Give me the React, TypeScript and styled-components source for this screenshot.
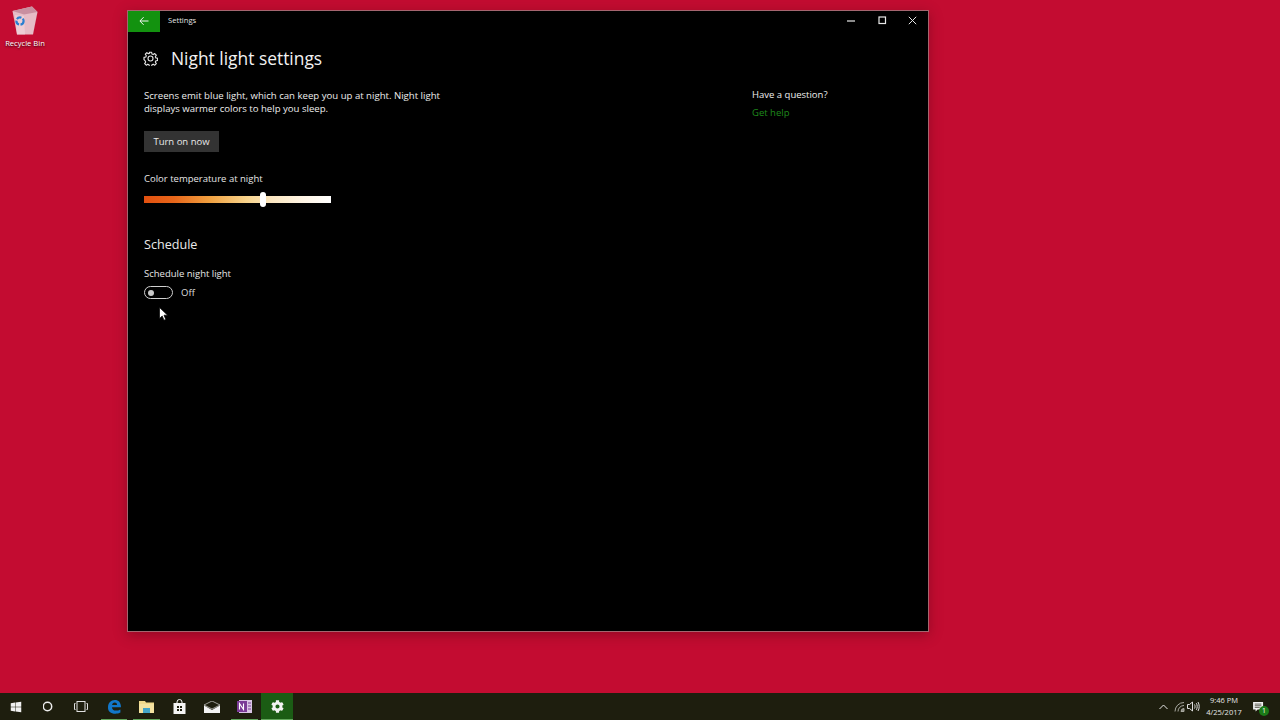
import { FC } from 'react';
import styled, { createGlobalStyle } from 'styled-components';
import { FaWindows, FaCog } from 'react-icons/fa';

const GlobalStyle = createGlobalStyle`
  html, body {
    margin: 0;
    padding: 0;
    overflow: hidden;
    background: #c30c31;
  }
  * { box-sizing: border-box; }
`;

const UI_FONT = `"Open Sans", "Noto Sans", "Liberation Sans", sans-serif`;

const GearIcon: FC<{ size: number; color: string; strokeWidth?: number }> = ({ size, color, strokeWidth = 1.8 }) => (
  <svg width={size} height={size} viewBox="0 0 24 24" fill="none" stroke={color} strokeWidth={strokeWidth} strokeLinejoin="round">
    <path d="M10.2 2h3.6l.6 2.9 1.9.8 2.5-1.6 2.5 2.5-1.6 2.5.8 1.9 2.9.6v3.6l-2.9.6-.8 1.9 1.6 2.5-2.5 2.5-2.5-1.6-1.9.8-.6 2.9h-3.6l-.6-2.9-1.9-.8-2.5 1.6-2.5-2.5 1.6-2.5-.8-1.9L1.600 13.800v-3.600l2.900-.6.8-1.900-1.600-2.500 2.500-2.500 2.500 1.600 1.900-.8z" />
    <circle cx="12" cy="12" r="4" />
  </svg>
);

const Desktop = styled.div`
  position: relative;
  width: 1280px;
  height: 720px;
  display: flex;
  flex-direction: column;
  font-family: ${UI_FONT};
  background: #c30c31;
`;

const Wallpaper = styled.div`
  flex: 1;
  position: relative;
`;

const DesktopIcon = styled.div`
  position: absolute;
  left: 0;
  top: 6px;
  width: 50px;
  display: flex;
  flex-direction: column;
  align-items: center;
  gap: 2px;
`;

const DesktopIconLabel = styled.span`
  font-size: 7.6px;
  line-height: 12px;
  color: #fff;
  white-space: nowrap;
  text-shadow: 0 1px 2px rgba(0, 0, 0, 0.8);
`;

const Window = styled.div`
  position: absolute;
  left: 127px;
  top: 10px;
  width: 802px;
  height: 622px;
  background: #000;
  border: 1px solid #a5656f;
  display: flex;
  flex-direction: column;
  box-shadow: 0 3px 12px rgba(60, 0, 15, 0.35);
`;

const TitleBar = styled.div`
  height: 21px;
  flex: none;
  display: flex;
  align-items: center;
`;

const BackButton = styled.div`
  width: 32px;
  height: 21px;
  padding-bottom: 1px;
  background: #13920f;
  display: flex;
  align-items: center;
  justify-content: center;
`;

const TitleText = styled.span`
  margin-left: 8px;
  margin-bottom: 3px;
  font-size: 7.6px;
  color: #e4e4e4;
  flex: 1;
`;

const WindowControls = styled.div`
  display: flex;
  align-items: center;
`;

const WindowControl = styled.div`
  width: 30.5px;
  height: 19px;
  margin-bottom: 2px;
  display: flex;
  align-items: center;
  justify-content: center;
`;

const Content = styled.div`
  flex: 1;
  display: flex;
  justify-content: space-between;
  padding: 0 0 0 16px;
`;

const MainColumn = styled.div`
  display: flex;
  flex-direction: column;
  align-items: flex-start;
`;

const PageHeader = styled.div`
  display: flex;
  align-items: center;
  gap: 13px;
  height: 26px;
  margin-top: 13px;
  margin-left: -1px;
`;

const PageTitle = styled.h1`
  margin: 0;
  font-size: 17.4px;
  font-weight: 400;
  line-height: 26px;
  color: #f2f2f2;
`;

const Body = styled.p`
  margin: 18px 0 0;
  width: 310px;
  font-size: 9.6px;
  line-height: 13px;
  color: #ededed;
`;

const ActionButton = styled.div`
  margin-top: 16px;
  height: 21px;
  width: 75px;
  background: #333;
  color: #e8e8e8;
  font-size: 9.5px;
  display: flex;
  align-items: center;
  justify-content: center;
`;

const FieldLabel = styled.div<{ $top: number }>`
  margin-top: ${(p) => p.$top}px;
  font-size: 9.5px;
  line-height: 14px;
  color: #e6e6e6;
`;

const SliderTrack = styled.div`
  position: relative;
  margin-top: 10px;
  width: 187px;
  height: 7px;
  background: linear-gradient(
    90deg,
    #e2500f 0%,
    #e8661a 16%,
    #f0a040 35%,
    #f8d48c 55%,
    #fbe6c0 68%,
    #fff5e5 85%,
    #ffffff 100%
  );
`;

const SliderThumb = styled.div`
  position: absolute;
  left: 116px;
  top: -4px;
  width: 6px;
  height: 15px;
  border-radius: 3px;
  background: #fff;
`;

const SectionTitle = styled.h2`
  margin: 33px 0 0;
  font-size: 12.6px;
  font-weight: 400;
  line-height: 18px;
  color: #eaeaea;
`;

const ToggleRow = styled.div`
  margin-top: 5px;
  display: flex;
  align-items: center;
  gap: 8px;
`;

const ToggleTrack = styled.div`
  width: 29px;
  height: 13px;
  border: 1.5px solid #d0d0d0;
  border-radius: 7px;
  display: flex;
  align-items: center;
  padding-left: 3px;
`;

const ToggleKnob = styled.div`
  width: 6px;
  height: 6px;
  border-radius: 50%;
  background: #c9c9c9;
`;

const ToggleText = styled.span`
  font-size: 9.5px;
  color: #dcdcdc;
`;

const SideColumn = styled.div`
  width: 176px;
  padding-top: 56px;
  display: flex;
  flex-direction: column;
`;

const SideTitle = styled.div`
  font-size: 9.5px;
  line-height: 14px;
  color: #eee;
`;

const SideLink = styled.div`
  margin-top: 4px;
  font-size: 9.5px;
  line-height: 14px;
  color: #1f8a1c;
`;

const Cursor = styled.svg`
  position: absolute;
  left: 159px;
  top: 307px;
`;

const Taskbar = styled.div`
  flex: none;
  height: 27px;
  background: #1e1e0e;
  display: flex;
  align-items: stretch;
  justify-content: space-between;
`;

const TaskList = styled.div`
  display: flex;
  align-items: stretch;
`;

const TaskButton = styled.div<{ $running?: boolean; $active?: boolean }>`
  width: 32.6px;
  display: flex;
  align-items: center;
  justify-content: center;
  background: ${(p) => (p.$active ? '#1b5c14' : 'transparent')};
  box-shadow: ${(p) =>
    p.$active
      ? 'inset 0 -1px 0 #63a85c'
      : p.$running
        ? 'inset 3px 0 0 #1e1e0e, inset -3px 0 0 #1e1e0e, inset 0 -1px 0 #63a85c'
        : 'none'};
`;

const Tray = styled.div`
  display: flex;
  align-items: center;
  color: #e6e6e6;
  padding-right: 6px;
`;

const TrayIcon = styled.div<{ $width: number }>`
  width: ${(p) => p.$width}px;
  display: flex;
  justify-content: center;
`;

const Clock = styled.div`
  width: 36px;
  margin-left: 5px;
  text-align: center;
  font-size: 7.5px;
  line-height: 11.5px;
  color: #e6e6e6;
  white-space: nowrap;
`;

const NotifyButton = styled.div`
  position: relative;
  width: 32px;
  height: 100%;
  display: flex;
  align-items: center;
  justify-content: center;
`;

const NotifyBadge = styled.div`
  position: absolute;
  left: 17px;
  top: 13px;
  width: 10px;
  height: 10px;
  border-radius: 50%;
  background: #1b7a17;
  color: #fff;
  font-size: 7px;
  line-height: 10px;
  text-align: center;
`;

const App: FC = () => (
  <Desktop>
    <GlobalStyle />
    <Wallpaper>
      <DesktopIcon>
        <svg width="26" height="29" viewBox="0 0 26 29">
          <path d="M.5 5 20 .5 25.5 6 21 28.5H5z" fill="#e6bcc6" />
          <path d="M.5 5 20 .5 25.5 6 12 8.5z" fill="#c98fa0" />
          <path d="M5 28.5 3 9l9 1 1 18.5z" fill="#f2d9de" opacity="0.6" />
          <circle cx="8" cy="15" r="3.6" fill="none" stroke="#2a7fd0" strokeWidth="2.2" strokeDasharray="5 1.5" />
        </svg>
        <DesktopIconLabel>Recycle Bin</DesktopIconLabel>
      </DesktopIcon>

      <Window>
        <TitleBar>
          <BackButton>
            <svg width="10" height="10" viewBox="0 0 10 10" fill="none" stroke="#f4f4f4" strokeWidth="1">
              <path d="M9.5 5H1M4.6 1.2 .9 5l3.7 3.8" />
            </svg>
          </BackButton>
          <TitleText>Settings</TitleText>
          <WindowControls>
            <WindowControl>
              <svg width="9" height="9" viewBox="0 0 9 9" stroke="#e8e8e8" strokeWidth="1.2"><path d="M0 5h8" /></svg>
            </WindowControl>
            <WindowControl>
              <svg width="9" height="9" viewBox="0 0 9 9" fill="none" stroke="#e8e8e8" strokeWidth="1.2"><rect x="1" y="1" width="6.5" height="6.5" /></svg>
            </WindowControl>
            <WindowControl>
              <svg width="9" height="9" viewBox="0 0 9 9" stroke="#e8e8e8" strokeWidth="1"><path d="M.8.8l7.4 7.4M8.2.8.8 8.2" /></svg>
            </WindowControl>
          </WindowControls>
        </TitleBar>
        <Content>
          <MainColumn>
            <PageHeader>
              <GearIcon size={15} color="#e6e6e6" />
              <PageTitle>Night light settings</PageTitle>
            </PageHeader>
            <Body>
              Screens emit blue light, which can keep you up at night. Night light
              <br />
              displays warmer colors to help you sleep.
            </Body>
            <ActionButton>Turn on now</ActionButton>
            <FieldLabel $top={20}>Color temperature at night</FieldLabel>
            <SliderTrack>
              <SliderThumb />
            </SliderTrack>
            <SectionTitle>Schedule</SectionTitle>
            <FieldLabel $top={13}>Schedule night light</FieldLabel>
            <ToggleRow>
              <ToggleTrack>
                <ToggleKnob />
              </ToggleTrack>
              <ToggleText>Off</ToggleText>
            </ToggleRow>
          </MainColumn>
          <SideColumn>
            <SideTitle>Have a question?</SideTitle>
            <SideLink>Get help</SideLink>
          </SideColumn>
        </Content>
      </Window>

      <Cursor width="9" height="14" viewBox="0 0 9 14">
        <path d="M.5.5v11l2.7-2.5 1.8 4.2 1.8-.8L5 8.2h3.6z" fill="#fff" stroke="#000" strokeWidth=".7" />
      </Cursor>
    </Wallpaper>

    <Taskbar>
      <TaskList>
        <TaskButton>
          <FaWindows size={12} color="#f0f0f0" />
        </TaskButton>
        <TaskButton>
          <svg width="11" height="11" viewBox="0 0 11 11" fill="none" stroke="#ececec" strokeWidth="1.5"><circle cx="4.5" cy="5.5" r="4.2" /></svg>
        </TaskButton>
        <TaskButton>
          <svg width="15" height="11" viewBox="1 0 15 11" fill="none" stroke="#e0e0e0" strokeWidth="1">
            <rect x="4" y=".5" width="8" height="10" />
            <path d="M2.500 2.500h-1v6h1M13.500 2.500h1v6h-1" />
          </svg>
        </TaskButton>
        <TaskButton $running>
          <svg width="15" height="15" viewBox="0 0 15 15">
            <path d="M1 8.5C1 3.8 4 1 7.8 1c3.800 0 6.200 2.600 6.200 7.200H5c.1 2.300 1.600 3.400 3.800 3.400 1.600 0 3.200-.4 4.600-1.200v3.200c-1.400.8-3.200 1.200-5 1.200C3.600 14.800 1 12.400 1 8.500zM5.100 6h5c-.1-1.700-1-2.500-2.400-2.500S5.300 4.400 5.100 6z" fill="#1277c9" />
          </svg>
        </TaskButton>
        <TaskButton $running>
          <svg width="15" height="13" viewBox="0 0 15 13">
            <path d="M0 1h6l1 1.500h8V13H0z" fill="#f0d98c" />
            <rect x="0" y="4" width="15" height="9" fill="#f4e2a0" />
            <rect x="4" y="8" width="7" height="5" fill="#43a5c9" />
          </svg>
        </TaskButton>
        <TaskButton>
          <svg width="13" height="15" viewBox="0 0 13 15">
            <path d="M4 4V3a2.500 2.500 0 0 1 5 0v1" fill="none" stroke="#f4f4f4" strokeWidth="1" />
            <path d="M.5 4h12v11H.5z" fill="#f4f4f4" />
            <path d="M4 7h2v2H4zM7 7h2v2H7zM4 10h2v2H4zM7 10h2v2H7z" fill="#1e1e0e" />
          </svg>
        </TaskButton>
        <TaskButton>
          <svg width="16" height="12" viewBox="0 0 16 12">
            <path d="M0 4 8 0l8 4-8 4z" fill="#1e1e0e" stroke="#f4f4f4" strokeWidth=".6" />
            <path d="M0 4.600 8 9l8-4.400V12H0z" fill="#f4f4f4" />
          </svg>
        </TaskButton>
        <TaskButton $running>
          <svg width="15" height="13" viewBox="0 0 15 13">
            <rect x="2" y="0" width="13" height="13" fill="#d8c4e4" />
            <rect x="0" y="1" width="10" height="11" fill="#7a3a96" />
            <path d="M2.500 9.500v-6l4 6v-6" fill="none" stroke="#fff" strokeWidth="1.100" />
            <path d="M11 3h3M11 6h3M11 9h3" stroke="#7a3a96" strokeWidth="1" />
          </svg>
        </TaskButton>
        <TaskButton $active>
          <FaCog size={13} color="#f2f2f2" />
        </TaskButton>
      </TaskList>
      <Tray>
        <TrayIcon $width={16.5}>
          <svg width="9" height="6" viewBox="0 0 9 6" fill="none" stroke="#e6e6e6" strokeWidth="1"><path d="M.5 5l4-4 4 4" /></svg>
        </TrayIcon>
        <TrayIcon $width={14.5}>
          <svg width="11" height="10" viewBox="0 0 11 10" fill="none" stroke="#a8a8a0" strokeWidth="1">
            <path d="M10 9.500H7A3 3 0 0 1 10 6.500z" fill="#8a8a82" />
            <path d="M4 9.500A6 6 0 0 1 10 3.500" />
            <path d="M1 9.500A9 9 0 0 1 10 .5" />
          </svg>
        </TrayIcon>
        <TrayIcon $width={14.5}>
          <svg width="13" height="11" viewBox="0 0 13 11" fill="none" stroke="#e0e0e0" strokeWidth="1">
            <path d="M.5 3.500h2L5.500 1v9L2.500 7.500h-2z" />
            <path d="M7.500 3.500c.7 1.200.7 2.800 0 4M9.300 2.200c1.200 2 1.200 4.600 0 6.600M11 1c1.600 2.700 1.600 6.300 0 9" />
          </svg>
        </TrayIcon>
        <Clock>
          9:46 PM
          <br />
          4/25/2017
        </Clock>
        <NotifyButton>
          <svg width="11" height="10" viewBox="0 0 13 12">
            <path d="M0 0h12v9H5.500L3 11.500V9H0z" fill="#f0f0f0" />
            <path d="M2 2.500h8M2 4.500h8M2 6.500h6" stroke="#1e1e0e" strokeWidth=".8" />
          </svg>
          <NotifyBadge>1</NotifyBadge>
        </NotifyButton>
      </Tray>
    </Taskbar>
  </Desktop>
);

export default App;
